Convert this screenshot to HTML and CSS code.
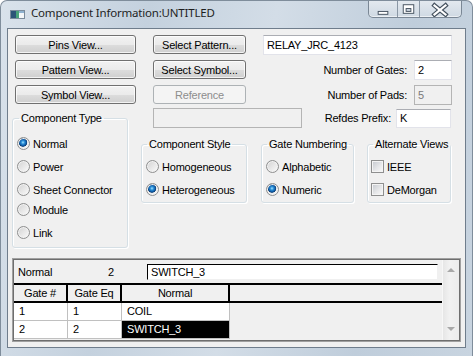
FILE: index.html
```html
<!DOCTYPE html>
<html lang="en">
<head>
  <meta charset="UTF-8" />
  <title>Component Information:UNTITLED</title>
  <link rel="stylesheet" href="styles.css">
</head>
<body>
  <div class="window">
    <div class="titlebar">
      <svg class="app-icon" width="15" height="9" viewBox="0 0 15 9">
        <rect x="0.5" y="0.5" width="14" height="8" fill="#f4f7f9" stroke="#7b8c9c"/>
        <rect x="1" y="1" width="5" height="7" fill="#2d5478"/>
        <rect x="6" y="1" width="3" height="7" fill="#4aa37a"/>
        <rect x="9" y="1" width="5" height="2" fill="#8fb2d0"/>
      </svg>
      <span class="title">Component Information:UNTITLED</span>
      <div class="controls">
        <span class="ctl ctl-min">
          <svg width="29" height="17" viewBox="0 0 29 17"><rect x="9.5" y="10.5" width="10" height="3" fill="#fff" stroke="#45525f"/></svg>
        </span>
        <span class="ctl ctl-max">
          <svg width="22" height="17" viewBox="0 0 22 17"><rect x="5.5" y="3.5" width="11" height="9" fill="#fff" stroke="#45525f"/><rect x="8.5" y="7.5" width="5" height="3" fill="#c9d3dd" stroke="#45525f"/></svg>
        </span>
        <span class="ctl ctl-close">
          <svg width="41" height="17" viewBox="0 0 41 17"><path d="M14.5 4.5 L25.5 13.5 M25.5 4.5 L14.5 13.5" stroke="#45525f" stroke-width="4.5" stroke-linecap="square"/><path d="M14.5 4.5 L25.5 13.5 M25.5 4.5 L14.5 13.5" stroke="#fff" stroke-width="2.2" stroke-linecap="square"/></svg>
        </span>
      </div>
    </div>

    <div class="client">
      <div class="top-rows">
        <button class="btn">Pins View...</button>
        <button class="btn">Select Pattern...</button>
        <input class="edit" type="text" value="RELAY_JRC_4123">

        <button class="btn">Pattern View...</button>
        <button class="btn">Select Symbol...</button>
        <div class="field">
          <span>Number of Gates:</span>
          <input class="edit edit-num" type="text" value="2">
        </div>

        <button class="btn">Symbol View...</button>
        <button class="btn" disabled>Reference</button>
        <div class="field">
          <span>Number of Pads:</span>
          <input class="edit edit-num" type="text" value="5" disabled>
        </div>
      </div>

      <div class="middle">
        <fieldset class="group group-type">
          <legend>Component Type</legend>
          <div class="opt"><span class="radio checked"></span>Normal</div>
          <div class="opt"><span class="radio"></span>Power</div>
          <div class="opt"><span class="radio"></span>Sheet Connector</div>
          <div class="opt opt-tight"><span class="radio"></span>Module</div>
          <div class="opt"><span class="radio"></span>Link</div>
        </fieldset>

        <div class="right-col">
          <div class="ref-row">
            <input class="edit edit-wide" type="text" value="" disabled>
            <div class="field field-ref">
              <span>Refdes Prefix:</span>
              <input class="edit edit-ref" type="text" value="K">
            </div>
          </div>

          <div class="groups">
            <fieldset class="group group-style">
              <legend>Component Style</legend>
              <div class="opt"><span class="radio"></span>Homogeneous</div>
              <div class="opt"><span class="radio checked"></span>Heterogeneous</div>
            </fieldset>
            <fieldset class="group group-num">
              <legend>Gate Numbering</legend>
              <div class="opt"><span class="radio"></span>Alphabetic</div>
              <div class="opt"><span class="radio checked"></span>Numeric</div>
            </fieldset>
            <fieldset class="group group-alt">
              <legend>Alternate Views</legend>
              <div class="opt"><span class="check"></span>IEEE</div>
              <div class="opt"><span class="check"></span>DeMorgan</div>
            </fieldset>
          </div>
        </div>
      </div>

      <div class="gate-grid">
        <div class="grid-main">
          <div class="edit-row">
            <span class="edit-label">Normal</span>
            <span class="edit-count">2</span>
            <span class="cell-edit">SWITCH_3</span>
          </div>
          <div class="table">
            <div class="th">Gate #</div>
            <div class="th">Gate Eq</div>
            <div class="th">Normal</div>
            <div class="th th-fill"></div>

            <div class="td">1</div>
            <div class="td">1</div>
            <div class="td">COIL</div>
            <div class="td-fill"></div>

            <div class="td">2</div>
            <div class="td">2</div>
            <div class="td selected">SWITCH_3</div>
            <div class="td-fill"></div>
          </div>
        </div>
        <div class="vscroll">
          <span class="arrow arrow-up"></span>
          <span class="arrow arrow-down"></span>
        </div>
      </div>
    </div>
  </div>
</body>
</html>
```

FILE: styles.css
```css
* {
  box-sizing: border-box;
}

body {
  margin: 0;
  background: #ffffff;
  font-family: "Liberation Sans", Arial, sans-serif;
  font-size: 11px;
  letter-spacing: -0.2px;
  color: #000;
}

/* window frame */

.window {
  width: 473px;
  height: 356px;
  overflow: hidden;
  border: 1px solid #7f8d9b;
  border-bottom: none;
  border-radius: 7px 7px 0 0;
  padding: 0 6px;
  background: linear-gradient(100deg, #d9e2eb 0%, #c4d1de 28%, #d3dde7 52%, #bfcddb 78%, #c8d4e0 100%);
  display: flex;
  flex-direction: column;
}

.titlebar {
  height: 27px;
  flex: none;
  display: flex;
  align-items: flex-start;
}

.app-icon {
  margin: 9px 0 0 3px;
  flex: none;
}

.title {
  margin: 4px 0 0 6px;
  font-family: "Noto Sans", "Open Sans", sans-serif;
  font-size: 11.5px;
  letter-spacing: -0.2px;
  line-height: 16px;
  color: #1e1e1e;
}

.controls {
  margin-left: auto;
  margin-right: 4px;
  display: flex;
  height: 17px;
  border: 1px solid #7a8795;
  border-top: none;
  border-radius: 0 0 5px 5px;
  overflow: hidden;
  background: linear-gradient(#e3e9ef, #cfd9e3);
  box-shadow: inset 0 -1px 0 rgba(255, 255, 255, 0.6);
}

.ctl {
  display: block;
  height: 16px;
}

.ctl svg {
  display: block;
}

.ctl-min,
.ctl-max {
  border-right: 1px solid #8a97a5;
}

.ctl-min svg { width: 28px; }
.ctl-max svg { width: 21px; }
.ctl-close svg { width: 41px; }

/* dialog client area */

.client {
  flex: none;
  border: 1px solid #6f7d8c;
  background: #f0f0f0;
  padding: 6px 0 5px 4px;
}

.top-rows {
  display: grid;
  grid-template-columns: 121px 93px 189px;
  grid-auto-rows: 20px;
  column-gap: 17px;
  row-gap: 5px;
  padding-left: 3px;
}

.btn {
  height: 19px;
  align-self: start;
  padding: 0;
  font: inherit;
  letter-spacing: inherit;
  color: #000;
  border: 1px solid #707070;
  border-radius: 3px;
  background: linear-gradient(#f2f2f2 0%, #ebebeb 50%, #dddddd 51%, #cfcfcf 100%);
  box-shadow: inset 0 0 0 1px rgba(255, 255, 255, 0.75);
}

.btn:disabled {
  color: #8d8d8d;
  border-color: #adb2b5;
  background: #f4f4f4;
  box-shadow: none;
}

.edit {
  height: 20px;
  margin: 0;
  padding: 0 3px;
  font: inherit;
  letter-spacing: inherit;
  color: #000;
  background: #fff;
  border: 1px solid #e2e3ea;
  border-top-color: #abadb3;
  outline: none;
}

.edit:disabled {
  background: #f0f0f0;
  color: #7a7a7a;
  border-color: #b4b4b4;
}

.edit-num {
  width: 38px;
}

.field {
  display: flex;
  align-items: center;
  justify-content: flex-end;
  gap: 7px;
  height: 20px;
}

/* middle part: group boxes */

.middle {
  display: flex;
  align-items: flex-start;
  gap: 13px;
  margin-top: 3px;
}

.group {
  margin: 0;
  min-width: 0;
  border: 1px solid #d5dfe5;
  border-radius: 3px;
  box-shadow: 1px 1px 0 #fff, inset 1px 1px 0 #fff;
}

.group legend {
  padding: 0 2px;
  margin-left: 1px;
  line-height: 14px;
  white-space: nowrap;
}

.group-type {
  width: 116px;
  margin-top: 3px;
  padding: 7px 0 3px 4px;
}

.group-type legend {
  margin-left: 2px;
}

.opt {
  display: flex;
  align-items: center;
  gap: 3px;
  height: 23px;
  white-space: nowrap;
}

.opt-tight {
  margin-top: -3px;
}

.radio {
  flex: none;
  width: 13px;
  height: 13px;
  border-radius: 50%;
  border: 1px solid #8e8f8f;
  background: linear-gradient(135deg, #d2d2d2, #fbfbfb);
  box-shadow: inset 0 0 0 1px #f2f2f2;
}

.radio.checked {
  background:
    radial-gradient(circle at 45% 40%, #a8e4ff 0, #2e93da 1.6px, #0f5ca8 3.2px, #0a3d74 4px, transparent 4.6px),
    linear-gradient(135deg, #d2d2d2, #fbfbfb);
}

.check {
  flex: none;
  width: 13px;
  height: 13px;
  border: 1px solid #8e8f8f;
  background: linear-gradient(135deg, #c4c8ce 0%, #e6e7e9 55%, #fafafa 100%);
  box-shadow: inset 0 0 0 1px #f4f4f4;
}

.right-col {
  width: 311px;
}

.ref-row {
  display: flex;
  align-items: center;
  height: 20px;
}

.edit-wide {
  width: 149px;
  margin-left: 12px;
}

.field-ref {
  margin-left: auto;
  margin-right: 1px;
  gap: 5px;
}

.edit-ref {
  width: 55px;
  height: 19px;
}

.groups {
  display: flex;
  margin-top: 9px;
}

.group-style,
.group-num,
.group-alt {
  padding: 4px 0 1px 4px;
}

.group-style { width: 106px; }
.group-num { width: 93px; margin-left: 14px; }
.group-alt { width: 84px; margin-left: 13px; padding-left: 3px; }
.group-alt legend { margin-left: 2px; }

/* gate grid */

.gate-grid {
  display: flex;
  width: 449px;
  margin-top: 10px;
  border: 1px solid #a0a0a0;
  padding: 1px;
  box-shadow: inset 0 0 0 1px #6e6e6e;
  background: #f0f0f0;
}

.grid-main {
  width: 428px;
  padding-bottom: 1px;
}

.edit-row {
  display: flex;
  align-items: center;
  height: 23px;
}

.edit-label {
  width: 90px;
  padding-left: 4px;
}

.edit-count {
  width: 43px;
  padding-left: 4px;
}

.cell-edit {
  width: 291px;
  height: 16px;
  line-height: 14px;
  padding-left: 3px;
  background: #fff;
  border: 1px solid #f0f0f0;
  border-top-color: #000;
  border-left-color: #000;
}

.table {
  display: grid;
  grid-template-columns: 54px 54px 108px 1fr;
  grid-template-rows: 20px 18px 18px;
}

.th {
  background: #f0f0f0;
  border-top: 2px solid #000;
  border-bottom: 2px solid #000;
  border-right: 2px solid #000;
  text-align: center;
  line-height: 16px;
}

.th-fill {
  border-right: none;
}

.td {
  background: #fff;
  border-right: 1px solid #c0c0c0;
  border-bottom: 1px solid #c0c0c0;
  padding-left: 5px;
  line-height: 17px;
}

.td.selected {
  background: #000;
  color: #fff;
}

.vscroll {
  width: 17px;
  display: flex;
  flex-direction: column;
  justify-content: space-between;
  align-items: center;
  padding: 8px 0 9px;
  background: linear-gradient(90deg, #e6e6e6, #f1f1f1 40%, #ececec);
  border-left: 1px solid #f7f7f7;
}

.arrow {
  width: 0;
  height: 0;
  border-left: 4px solid transparent;
  border-right: 4px solid transparent;
}

.arrow-up {
  border-bottom: 4px solid #a8a8a8;
}

.arrow-down {
  border-top: 4px solid #a8a8a8;
}
```
